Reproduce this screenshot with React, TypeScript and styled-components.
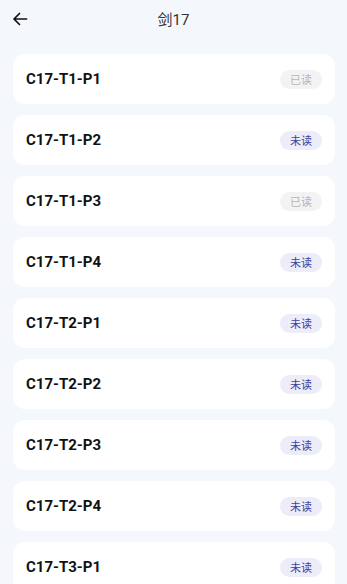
import React from "react";
import styled, { createGlobalStyle } from "styled-components";

const GlobalStyle = createGlobalStyle`
  html, body {
    margin: 0;
    padding: 0;
    background: #f4f7fb;
  }
  body {
    font-family: Roboto, "Noto Sans", "Noto Sans CJK SC", sans-serif;
  }
`;

const Page = styled.div`
  width: 347px;
  min-height: 584px;
  background: #f4f7fb;
`;

const Header = styled.div`
  height: 37px;
  display: flex;
  align-items: center;
  justify-content: center;
  position: relative;
`;

const BackButton = styled.button`
  position: absolute;
  left: 10px;
  top: 9px;
  width: 20px;
  height: 20px;
  padding: 0;
  border: none;
  background: none;
  display: flex;
  align-items: center;
  justify-content: center;
`;

const Title = styled.h1`
  margin: 0;
  font-size: 15px;
  font-weight: 400;
  color: #333333;
  font-family: Roboto, "Noto Sans CJK SC", sans-serif;
`;

const List = styled.div`
  display: flex;
  flex-direction: column;
  gap: 11px;
  padding: 17px 12px 0 13px;
`;

const Card = styled.div`
  height: 50px;
  background: #ffffff;
  border-radius: 12px;
  display: flex;
  align-items: center;
  justify-content: space-between;
  padding: 0 13px;
`;

const Name = styled.span`
  font-family: Roboto, "Noto Sans", sans-serif;
  font-weight: 700;
  font-size: 15px;
  color: #111111;
`;

const Badge = styled.span<{ $read: boolean }>`
  width: 42px;
  height: 19px;
  border-radius: 10px;
  display: flex;
  align-items: center;
  justify-content: center;
  font-size: 11px;
  font-family: "Noto Sans CJK SC", sans-serif;
  background: ${(p) => (p.$read ? "#f3f3f4" : "#ecedf9")};
  color: ${(p) => (p.$read ? "#b5b5b8" : "#3d41a0")};
`;

const items: { name: string; read: boolean }[] = [
  { name: "C17-T1-P1", read: true },
  { name: "C17-T1-P2", read: false },
  { name: "C17-T1-P3", read: true },
  { name: "C17-T1-P4", read: false },
  { name: "C17-T2-P1", read: false },
  { name: "C17-T2-P2", read: false },
  { name: "C17-T2-P3", read: false },
  { name: "C17-T2-P4", read: false },
  { name: "C17-T3-P1", read: false },
];

export default function App() {
  return (
    <Page>
      <GlobalStyle />
      <Header>
        <BackButton>
          <svg width="16" height="16" viewBox="0 0 16 16" fill="none">
            <path
              d="M14.5 8H2M7.5 2.5L2 8l5.5 5.5"
              stroke="#111"
              strokeWidth="1.7"
              strokeLinecap="round"
              strokeLinejoin="round"
            />
          </svg>
        </BackButton>
        <Title>剑17</Title>
      </Header>
      <List>
        {items.map((it) => (
          <Card key={it.name}>
            <Name>{it.name}</Name>
            <Badge $read={it.read}>{it.read ? "已读" : "未读"}</Badge>
          </Card>
        ))}
      </List>
    </Page>
  );
}
